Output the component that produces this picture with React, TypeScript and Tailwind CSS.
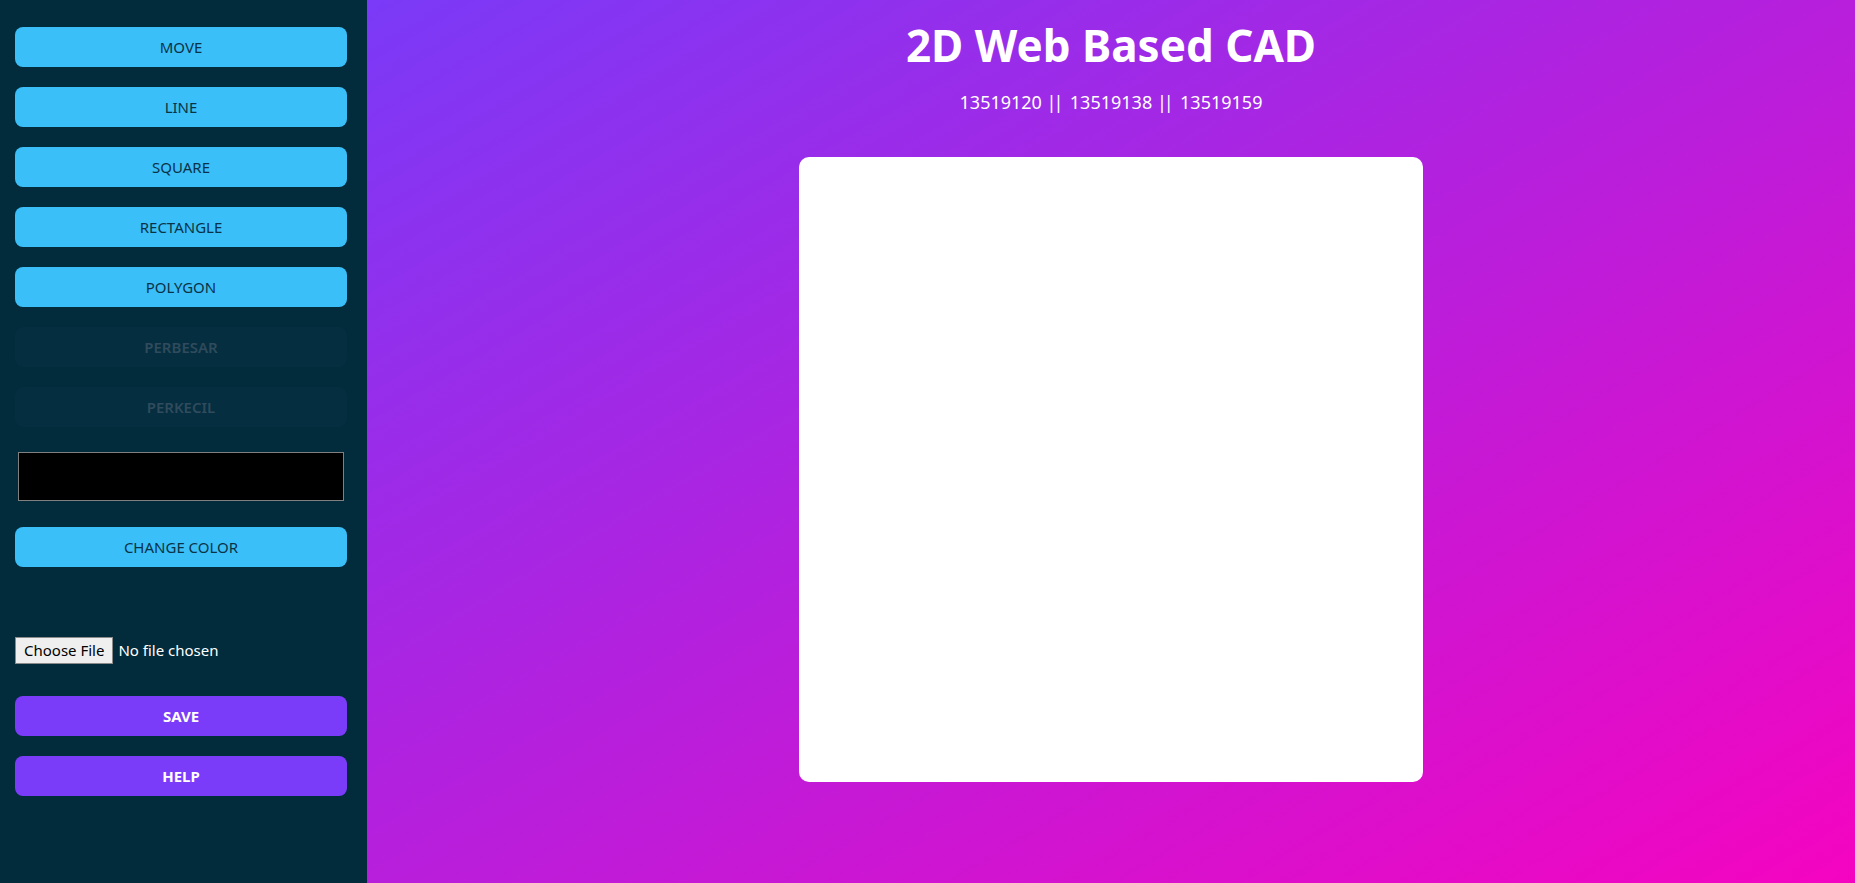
import React from 'react';

const toolButtons = ['MOVE', 'LINE', 'SQUARE', 'RECTANGLE', 'POLYGON'];
const disabledButtons = ['PERBESAR', 'PERKECIL'];

const font = { fontFamily: '"Noto Sans", "Open Sans", sans-serif' };

const App: React.FC = () => {
  return (
    <div className="flex h-[883px] w-full overflow-hidden" style={font}>
      <aside className="flex w-[367px] shrink-0 flex-col bg-[#022b3c] pl-[15px] pr-[20px] pt-[27px]">
        <div className="flex flex-col gap-5">
          {toolButtons.map((label) => (
            <button
              key={label}
              className="h-10 w-full rounded-lg bg-[#3bbff9] text-[15px] text-[#0b3347]"
            >
              {label}
            </button>
          ))}
          {disabledButtons.map((label) => (
            <button
              key={label}
              disabled
              className="h-10 w-full rounded-lg bg-[#052e40] text-[15px] font-semibold text-[#2f4b5c]"
            >
              {label}
            </button>
          ))}
        </div>

        <div className="mx-[3px] mt-[25px] h-[49px] border border-[#808080] bg-black" />

        <button className="mt-[26px] h-10 w-full rounded-lg bg-[#3bbff9] text-[15px] text-[#0b3347]">
          CHANGE COLOR
        </button>

        <div className="mt-[70px] flex items-center gap-[5px]">
          <span className="flex h-[27px] items-center border border-[#8a8a8a] bg-[#efefef] px-[8px] text-[15px] text-black">
            Choose File
          </span>
          <span className="text-[15px] text-white">No file chosen</span>
        </div>

        <div className="mt-[32px] flex flex-col gap-5">
          <button className="h-10 w-full rounded-lg bg-[#7b3cf9] text-[15px] font-bold text-white">
            SAVE
          </button>
          <button className="h-10 w-full rounded-lg bg-[#7b3cf9] text-[15px] font-bold text-white">
            HELP
          </button>
        </div>
      </aside>

      <main className="flex flex-1 flex-col items-center bg-linear-to-br/srgb from-[#7a3af7] to-[#f504c0]">
        <h1 className="mt-[18px] text-[44px] font-bold leading-[54px] text-white">2D Web Based CAD</h1>
        <p className="mt-[18px] text-[18px] leading-6 text-white">
          13519120 <span className="tracking-[-3px]">||</span>&nbsp;&nbsp;13519138 <span className="tracking-[-3px]">||</span>&nbsp;&nbsp;13519159
        </p>
        <div className="mt-[43px] h-[625px] w-[624px] rounded-[10px] bg-white" />
      </main>
    </div>
  );
};

export default App;
